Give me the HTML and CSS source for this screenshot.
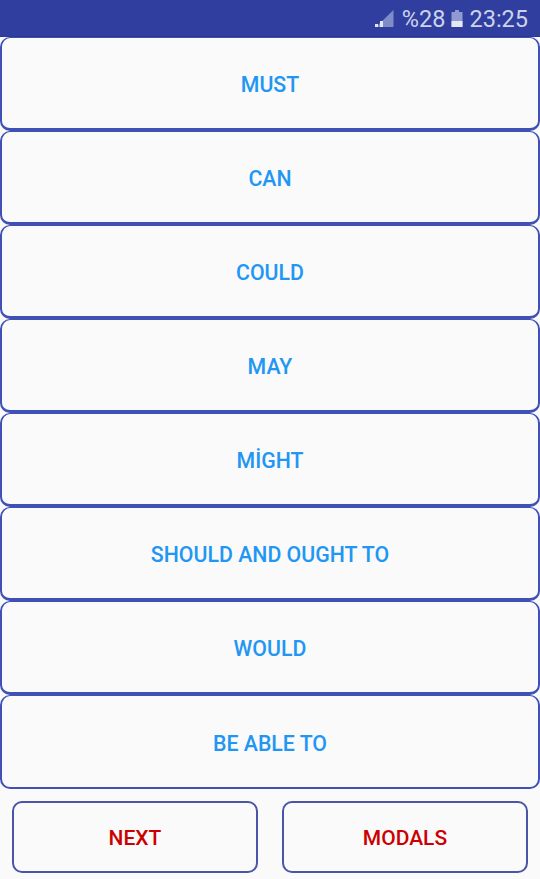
FILE: index.html
```html
<!DOCTYPE HTML>
<html>
<head>
    <meta charset="utf-8">
    <title>Modals</title>
    <link rel="stylesheet" href="styles.css">
</head>
<body>
    <div class="status">
        <svg class="signal" width="20" height="20" viewBox="0 0 20 20">
            <path d="M19.500 1V18H2Z" fill="#7f8cc6"/>
            <path d="M1 18h3v-3H1zM6 18h3v-6H6z" fill="#e4e7f5"/>
        </svg>
        <span class="pct">%28</span>
        <svg class="battery" width="12" height="20" viewBox="0 0 12 20">
            <path d="M4 1h4v2h3.500v15H.5V3H4z" fill="#8f9bd0"/>
            <rect x="0.500" y="12" width="11" height="6" fill="#e4e7f5"/>
        </svg>
        <span class="time">23:25</span>
    </div>

    <div class="list">
        <button class="item">MUST</button>
        <button class="item">CAN</button>
        <button class="item">COULD</button>
        <button class="item">MAY</button>
        <button class="item">MİGHT</button>
        <button class="item">SHOULD AND OUGHT TO</button>
        <button class="item">WOULD</button>
        <button class="item last">BE ABLE TO</button>
    </div>

    <div class="bottom">
        <button class="nav">NEXT</button>
        <button class="nav">MODALS</button>
    </div>
</body>
</html>
```

FILE: styles.css
```css
body{
    margin:0;
    width:540px;
    height:879px;
    overflow:hidden;
    background-color:#fafafa;
    font-family:Roboto,sans-serif;
}
.status{
    height:34px;
    padding:2px 12px 0 0;
    background-color:#303f9f;
    border-bottom:1px solid #2a378c;
    display:flex;
    align-items:center;
    justify-content:flex-end;
    color:#ccd2ec;
    font-size:23.500px;
}
.signal{
    margin-right:8px;
}
.pct{
    margin-right:6px;
}
.battery{
    margin-right:8px;
}
.time{
    margin-left:-2px;
}
.list{
    display:flex;
    flex-direction:column;
}
.item{
    height:94px;
    padding:2px 0 0;
    background-color:#fafafa;
    border:2px solid #3f51b5;
    border-top-width:1px;
    border-bottom-width:3px;
    border-radius:10px;
    color:#2196f3;
    font-family:Roboto,sans-serif;
    font-size:21.300px;
    font-weight:500;
}
.item.last{
    border-bottom-width:2px;
    padding-top:3px;
}
.bottom{
    display:flex;
    justify-content:space-between;
    padding:12px 12px 0;
}
.nav{
    width:246px;
    height:72px;
    padding:2px 0 0;
    background-color:#fafafa;
    border:2px solid #4a55a8;
    border-radius:10px;
    color:#cc0000;
    font-family:Roboto,sans-serif;
    font-size:21px;
    font-weight:500;
}
```
